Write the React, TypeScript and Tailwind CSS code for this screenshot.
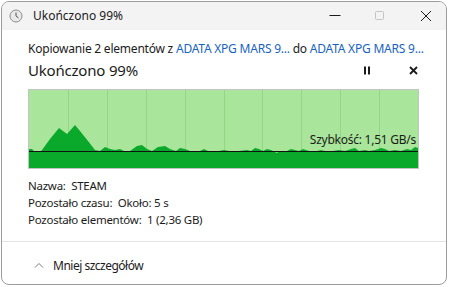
import React from "react";

const pts: [number, number][] = [
  [0, 59], [3, 59], [6, 62], [11, 62], [13, 60], [21, 49], [30, 38], [34, 41], [38, 44],
  [46, 35], [51, 41], [59, 51], [66, 60], [71, 61], [76, 57], [81, 59], [86, 60], [91, 59],
  [95, 61], [101, 61], [108, 56], [113, 55], [118, 59], [123, 61], [129, 57], [136, 56],
  [141, 59], [147, 61], [151, 58], [156, 59], [161, 61], [171, 61], [175, 59], [179, 61],
  [190, 61], [195, 60], [200, 61], [210, 61], [218, 60], [222, 61], [226, 58], [230, 59],
  [234, 61], [238, 59], [242, 60], [246, 62], [248, 63], [250, 61], [258, 61], [262, 59],
  [266, 60], [270, 61], [274, 59], [280, 61], [288, 61], [292, 60], [296, 61], [304, 61],
  [310, 60], [316, 61], [322, 59], [326, 58], [330, 61], [336, 60], [340, 61], [346, 60],
  [352, 58], [356, 59], [360, 61], [366, 60], [372, 61], [378, 59], [382, 60], [386, 57],
  [389, 58], [389, 78], [0, 78],
];

export default function App() {
  const font = { fontFamily: '"Noto Sans", "Segoe UI", sans-serif' };
  return (
    <div className="w-[449px] h-[287px] bg-white" style={font}>
      <div className="ml-[1px] mt-[1px] w-[446px] h-[284px] border border-[#9c9c9c] rounded-[8px] overflow-hidden flex flex-col bg-white text-[#1b1b1b]">
        {/* title bar */}
        <div className="h-[28px] shrink-0 bg-[#f3f3f3] flex items-center">
          <svg width="14" height="14" viewBox="0 0 14 14" className="ml-[7px]">
            <circle cx="7" cy="7" r="6" fill="#e9e9e9" stroke="#8c8c8c" strokeWidth="1" />
            <path d="M7 3.5 V7 L9.5 9" fill="none" stroke="#555" strokeWidth="1" />
          </svg>
          <span className="ml-[10px] text-[12px] leading-[16px]">Ukończono 99%</span>
          <div className="ml-auto flex items-center">
            <svg width="12" height="12" viewBox="0 0 12 12" className="mr-[34px]">
              <path d="M0.5 5.5 H11.5" stroke="#1b1b1b" strokeWidth="1" />
            </svg>
            <svg width="10" height="10" viewBox="0 0 10 10" className="mr-[35px]">
              <rect x="0.5" y="0.5" width="8" height="8" fill="none" stroke="#c4c4c4" strokeWidth="1" rx="1" />
            </svg>
            <svg width="12" height="12" viewBox="0 0 12 12" className="mr-[14px]">
              <path d="M1 1 L11 11 M11 1 L1 11" stroke="#1b1b1b" strokeWidth="1" />
            </svg>
          </div>
        </div>

        {/* content */}
        <div className="h-[212px] shrink-0 border-b border-[#e3e3e3] px-[26px] pt-[11px]">
          <div className="text-[12px] leading-[16px] whitespace-nowrap tracking-[-0.22px]">
            Kopiowanie 2 elementów z <span className="text-[#1863c1]">ADATA XPG MARS 9...</span> do{" "}
            <span className="text-[#1863c1]">ADATA XPG MARS 9...</span>
          </div>
          <div className="mt-[3px] w-[391px] flex items-center justify-between">
            <span className="text-[15px] leading-[20px] tracking-[-0.2px]">Ukończono 99%</span>
            <div className="flex items-center mr-[1px]">
              <svg width="8" height="9" viewBox="0 0 8 9" className="mr-[38px]">
                <rect x="1" y="0.5" width="2" height="8" fill="#1b1b1b" />
                <rect x="5" y="0.5" width="2" height="8" fill="#1b1b1b" />
              </svg>
              <svg width="9" height="9" viewBox="0 0 9 9">
                <path d="M1 1 L8 8 M8 1 L1 8" stroke="#1b1b1b" strokeWidth="1.8" />
              </svg>
            </div>
          </div>
          <div className="relative mt-[9px] w-[391px] h-[80px] border border-[#c4c4c4] bg-[#a9e59a]">
            <svg viewBox="0 0 389 78" preserveAspectRatio="none" className="w-full h-full block">
              {[1, 2, 3, 4, 5, 6, 7, 8, 9].map((i) => (
                <line key={i} x1={Math.round(i * 38.9) + 0.5} y1="0" x2={Math.round(i * 38.9) + 0.5} y2="78" stroke="#96d486" strokeWidth="1" />
              ))}
              <polygon points={pts.map((p) => p.join(",")).join(" ")} fill="#0aa92c" />
              <line x1="0" y1="61.5" x2="389" y2="61.5" stroke="#111" strokeWidth="1" />
            </svg>
            <span className="absolute right-[2px] top-[42px] text-[12px] leading-[16px] tracking-[-0.25px] text-[#1b1b1b] whitespace-nowrap">
              Szybkość: 1,51 GB/s
            </span>
          </div>
          <div className="mt-[8px] text-[11.5px] leading-[17px] tracking-[-0.25px]">
            <div>Nazwa:&nbsp; STEAM</div>
            <div>Pozostało czasu:&nbsp; Około: 5 s</div>
            <div>Pozostało elementów:&nbsp; 1 (2,36 GB)</div>
          </div>
        </div>

        {/* footer */}
        <div className="flex-1 flex items-center pl-[32px] pt-[3px]">
          <svg width="10" height="6" viewBox="0 0 10 6">
            <path d="M1 5.5 L5 1.5 L9 5.5" fill="none" stroke="#7a7a7a" strokeWidth="1" />
          </svg>
          <span className="ml-[9px] text-[12px] leading-[16px] tracking-[-0.5px] pt-[2px]">Mniej szczegółów</span>
        </div>
      </div>
    </div>
  );
}
